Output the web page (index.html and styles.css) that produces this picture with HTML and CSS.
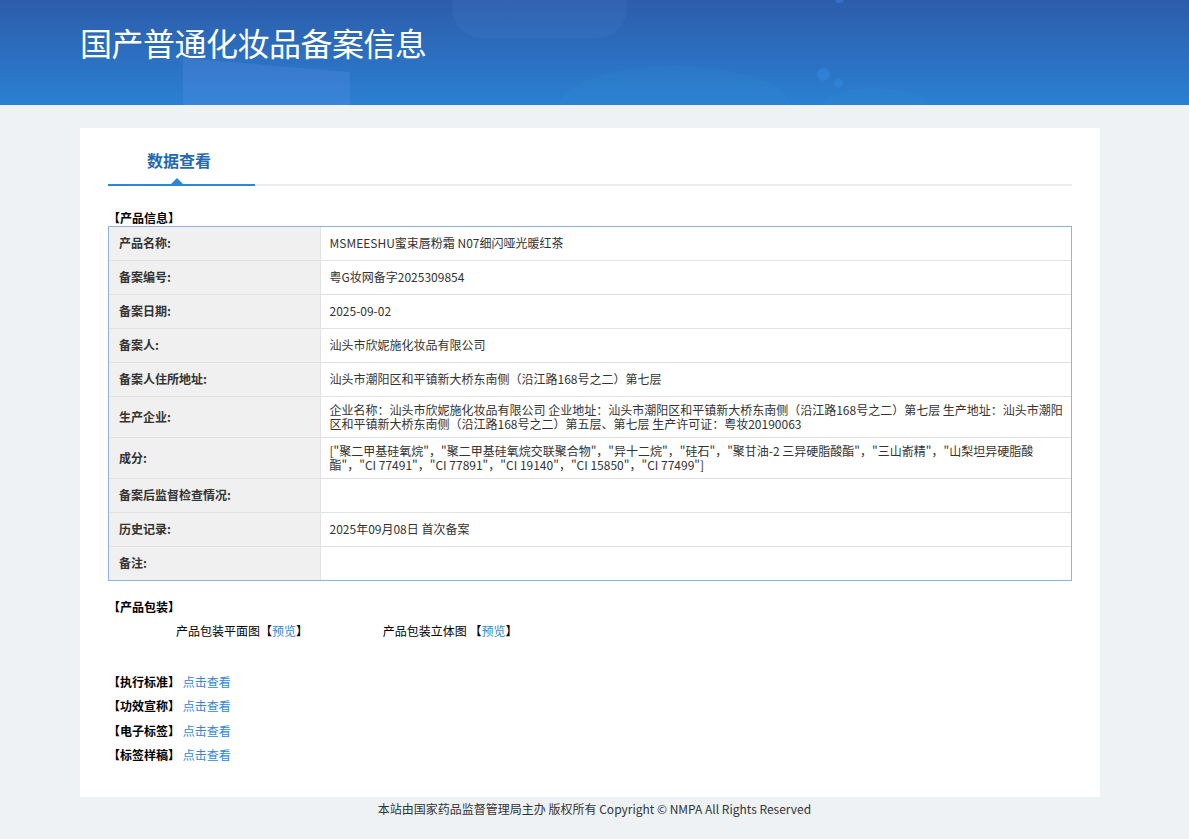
FILE: index.html
```html
<!DOCTYPE html>
<html lang="zh-CN">
<head>
<meta charset="utf-8">
<title>国产普通化妆品备案信息</title>
<link rel="stylesheet" href="styles.css">
</head>
<body>
<header class="header">
  <span class="deco deco-pill"></span>
  <span class="deco deco-trap"></span>
  <span class="deco deco-wave"></span>
  <span class="deco deco-wave2"></span>
  <span class="deco deco-dot1"></span>
  <span class="deco deco-dot2"></span>
  <span class="deco deco-dot3"></span>
  <h1 class="title">国产普通化妆品备案信息</h1>
</header>

<main class="card">
  <div class="tabbar">
    <div class="tab">数据查看<span class="tab-arrow"></span></div>
  </div>

  <div class="sec-title">【产品信息】</div>
  <div class="info-wrap">
    <table class="info">
      <tr><th>产品名称:</th><td>MSMEESHU蜜束唇粉霜 N07细闪哑光暖红茶</td></tr>
      <tr><th>备案编号:</th><td>粤G妆网备字2025309854</td></tr>
      <tr><th>备案日期:</th><td>2025-09-02</td></tr>
      <tr><th>备案人:</th><td>汕头市欣妮施化妆品有限公司</td></tr>
      <tr><th>备案人住所地址:</th><td>汕头市潮阳区和平镇新大桥东南侧（沿江路168号之二）第七层</td></tr>
      <tr><th>生产企业:</th><td class="td-wide">企业名称：汕头市欣妮施化妆品有限公司 企业地址：汕头市潮阳区和平镇新大桥东南侧（沿江路168号之二）第七层 生产地址：汕头市潮阳区和平镇新大桥东南侧（沿江路168号之二）第五层、第七层 生产许可证：粤妆20190063</td></tr>
      <tr><th>成分:</th><td>["聚二甲基硅氧烷"，"聚二甲基硅氧烷交联聚合物"，"异十二烷"，"硅石"，"聚甘油-2 三异硬脂酸酯"，"三山嵛精"，"山梨坦异硬脂酸酯"，"CI 77491"，"CI 77891"，"CI 19140"，"CI 15850"，"CI 77499"]</td></tr>
      <tr><th>备案后监督检查情况:</th><td></td></tr>
      <tr><th>历史记录:</th><td>2025年09月08日 首次备案</td></tr>
      <tr><th>备注:</th><td></td></tr>
    </table>
  </div>

  <div class="sec-title sec-pack">【产品包装】</div>
  <div class="pack-row">
    <span class="pack-item">产品包装平面图【<a class="link" href="#">预览</a>】</span>
    <span class="pack-item">产品包装立体图 【<a class="link" href="#">预览</a>】</span>
  </div>

  <ul class="links">
    <li><b>【执行标准】</b> <a class="link" href="#">点击查看</a></li>
    <li><b>【功效宣称】</b> <a class="link" href="#">点击查看</a></li>
    <li><b>【电子标签】</b> <a class="link" href="#">点击查看</a></li>
    <li><b>【标签样稿】</b> <a class="link" href="#">点击查看</a></li>
  </ul>
</main>

<footer class="footer">本站由国家药品监督管理局主办 版权所有 Copyright © NMPA All Rights Reserved</footer>
</body>
</html>
```

FILE: styles.css
```css
* { box-sizing: border-box; }

body {
  margin: 0;
  background: #eef2f5;
  font-family: "Noto Sans CJK SC", "Noto Sans", sans-serif;
  font-size: 12px;
  color: #333;
}

.header {
  position: relative;
  height: 105px;
  overflow: hidden;
  background: linear-gradient(180deg, #2c5daa 0%, #2c6cbd 45%, #2a80d2 100%);
  padding: 22px 0 0 80px;
}

.deco { position: absolute; display: block; }
.deco-pill {
  left: 452px; top: -22px; width: 175px; height: 60px;
  border-radius: 40px;
  background: rgba(90, 150, 220, 0.12);
}
.deco-trap {
  left: 183px; top: 58px; width: 167px; height: 50px;
  background: rgba(110, 150, 240, 0.22);
  clip-path: polygon(0 0, 100% 28%, 100% 100%, 0 100%);
}
.deco-wave {
  left: 560px; top: 66px; width: 230px; height: 80px;
  border-radius: 50%;
  background: rgba(60, 160, 225, 0.12);
}
.deco-wave2 {
  left: 820px; top: 88px; width: 110px; height: 40px;
  border-radius: 50%;
  background: rgba(60, 160, 225, 0.12);
}
.deco-dot1 { left: 817px; top: 68px; width: 13px; height: 13px; border-radius: 50%; background: rgba(50, 140, 230, 0.45); }
.deco-dot2 { left: 834px; top: 79px; width: 9px; height: 9px; border-radius: 50%; background: rgba(50, 140, 230, 0.45); }
.deco-dot3 { left: 835px; top: -3px; width: 9px; height: 6px; border-radius: 50%; background: rgba(50, 140, 230, 0.45); }

.title {
  position: relative;
  margin: 0;
  font-size: 32px;
  line-height: 40px;
  font-weight: normal;
  color: #fff;
  letter-spacing: -0.5px;
}

.card {
  display: block;
  width: 1020px;
  margin: 23px 0 0 80px;
  background: #fff;
  padding: 0 28px 29px;
}

.tabbar {
  height: 58px;
  border-bottom: 2px solid #ececec;
}

.tab {
  position: relative;
  width: 147px;
  height: 58px;
  padding: 22px 0 0 39px;
  font-size: 16px;
  line-height: 20px;
  font-weight: bold;
  color: #2567b0;
  border-bottom: 2px solid #2f86d6;
}

.tab-arrow {
  position: absolute;
  left: 63px;
  bottom: 0;
  width: 0; height: 0;
  border-left: 6px solid transparent;
  border-right: 6px solid transparent;
  border-bottom: 6px solid #2f86d6;
}

.sec-title {
  margin-top: 24px;
  font-weight: bold;
  line-height: 16px;
  color: #000;
}
.sec-pack { margin-top: 18px; }

.info-wrap {
  width: 964px;
  border: 1px solid #92b2e2;
}
.info {
  width: 100%;
  border-collapse: collapse;
  border-style: hidden;
}
.info th, .info td {
  height: 34px;
  border: 1px solid #e2e2e2;
  line-height: 14px;
  vertical-align: middle;
  font-size: 12px;
}
.info tr:first-child th, .info tr:first-child td { height: 33px; }
.info th {
  width: 211px;
  background: #f0f0f0;
  text-align: left;
  font-weight: bold;
  color: #333;
  padding: 6px 10px;
}
.info td {
  padding: 6px 20px 6px 9px;
  color: #333;
}
.info td.td-wide { padding-right: 8px; }

.pack-row {
  margin-top: 8px;
  padding-left: 68px;
  line-height: 16px;
  color: #000;
}
.pack-item { display: inline-block; }
.pack-item:first-child { width: 204px; }

.link { color: #2e86de; text-decoration: none; }

.links {
  list-style: none;
  margin: 31px 0 0;
  padding: 0;
}
.links li {
  line-height: 24.4px;
  color: #000;
}

.footer {
  text-align: center;
  line-height: 24px;
  color: #333;
  font-size: 12px;
}
```
